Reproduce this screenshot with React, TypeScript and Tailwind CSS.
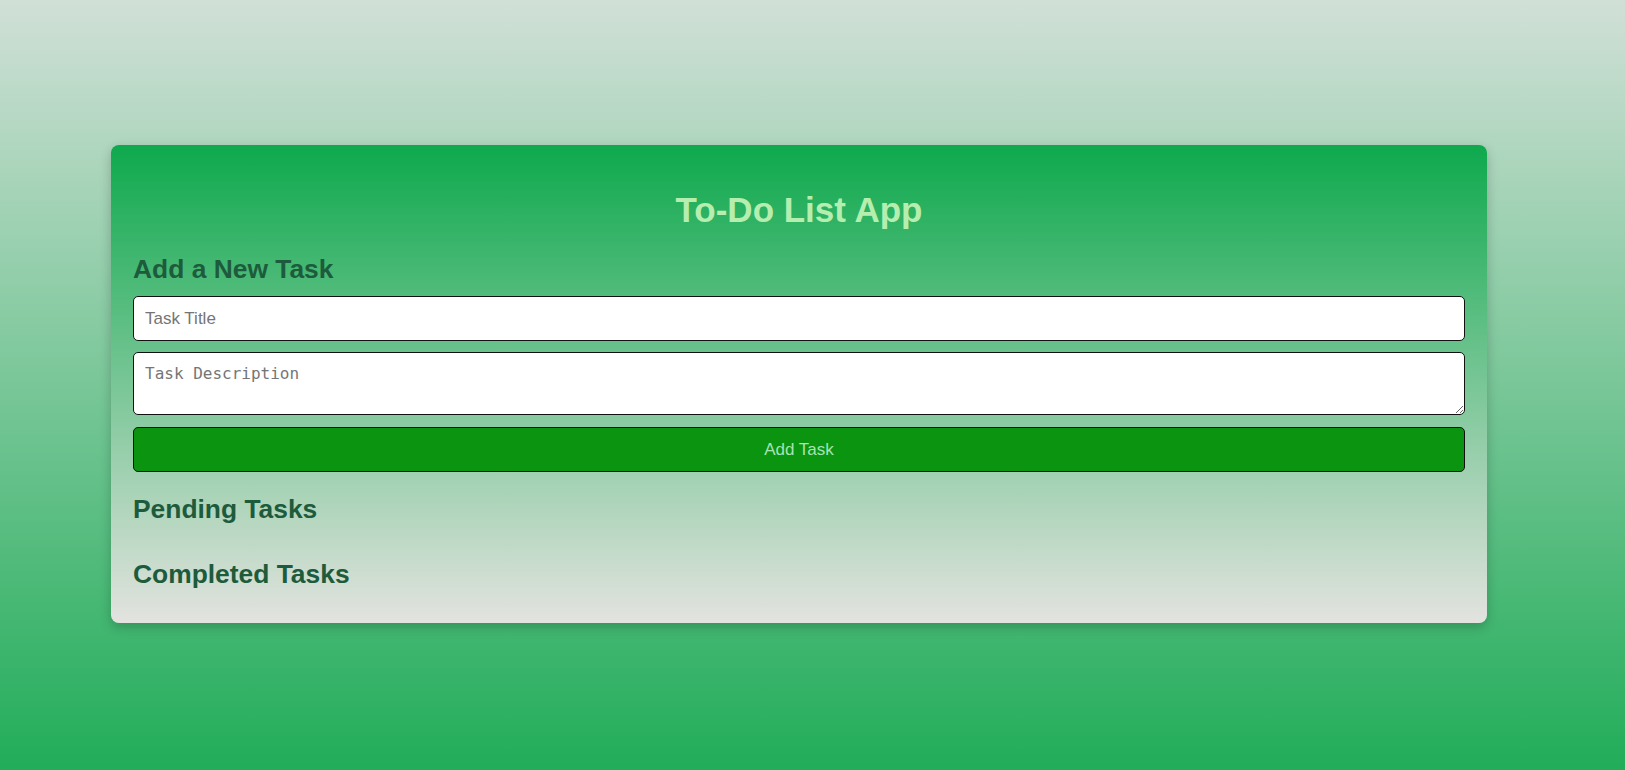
import { useState } from "react";

function SectionHeading({ children, className = "" }: { children: React.ReactNode; className?: string }) {
  return (
    <h2 className={`text-[26.4px] leading-[30px] font-bold text-[#1d5b3c] ${className}`}>{children}</h2>
  );
}

export default function App() {
  const [title, setTitle] = useState("");
  const [description, setDescription] = useState("");

  return (
    <div className="min-h-[770px] w-full overflow-hidden bg-[linear-gradient(to_bottom,#d1e0d7,#21ad59)] pt-[145px] font-['Liberation_Sans',Arial,sans-serif]">
      <div className="ml-[111px] w-[1376px] rounded-lg bg-[linear-gradient(to_bottom,#0ea94d,#e3e3df)] px-[22px] pt-[45px] pb-[34px] shadow-[0_4px_12px_rgba(0,0,0,0.22)]">
        <h1 className="text-center text-[35px] leading-[40px] font-bold text-[#b6eeb0]">To-Do List App</h1>

        <SectionHeading className="mt-[24px]">Add a New Task</SectionHeading>

        <div className="mt-[12px] flex flex-col gap-[11px]">
          <input
            value={title}
            onChange={(e) => setTitle(e.target.value)}
            placeholder="Task Title"
            className="h-[45px] w-full rounded-[5px] border border-[#111] bg-white px-[11px] text-[17px] text-[#222] outline-none placeholder:text-[#757575]"
          />
          <textarea
            value={description}
            onChange={(e) => setDescription(e.target.value)}
            placeholder="Task Description"
            className="block h-[63px] w-full rounded-[5px] border border-[#111] bg-white px-[11px] pt-[11px] font-['DejaVu_Sans_Mono',monospace] text-[16px] leading-[20px] text-[#222] outline-none placeholder:text-[#757575]"
          />
          <button className="mt-px h-[45px] w-full rounded-[5px] border border-[#111] bg-[#0a9410] text-[17px] text-[#a6e3b5]">
            Add Task
          </button>
        </div>

        <SectionHeading className="mt-[22px]">Pending Tasks</SectionHeading>
        <SectionHeading className="mt-[35px]">Completed Tasks</SectionHeading>
      </div>
    </div>
  );
}
